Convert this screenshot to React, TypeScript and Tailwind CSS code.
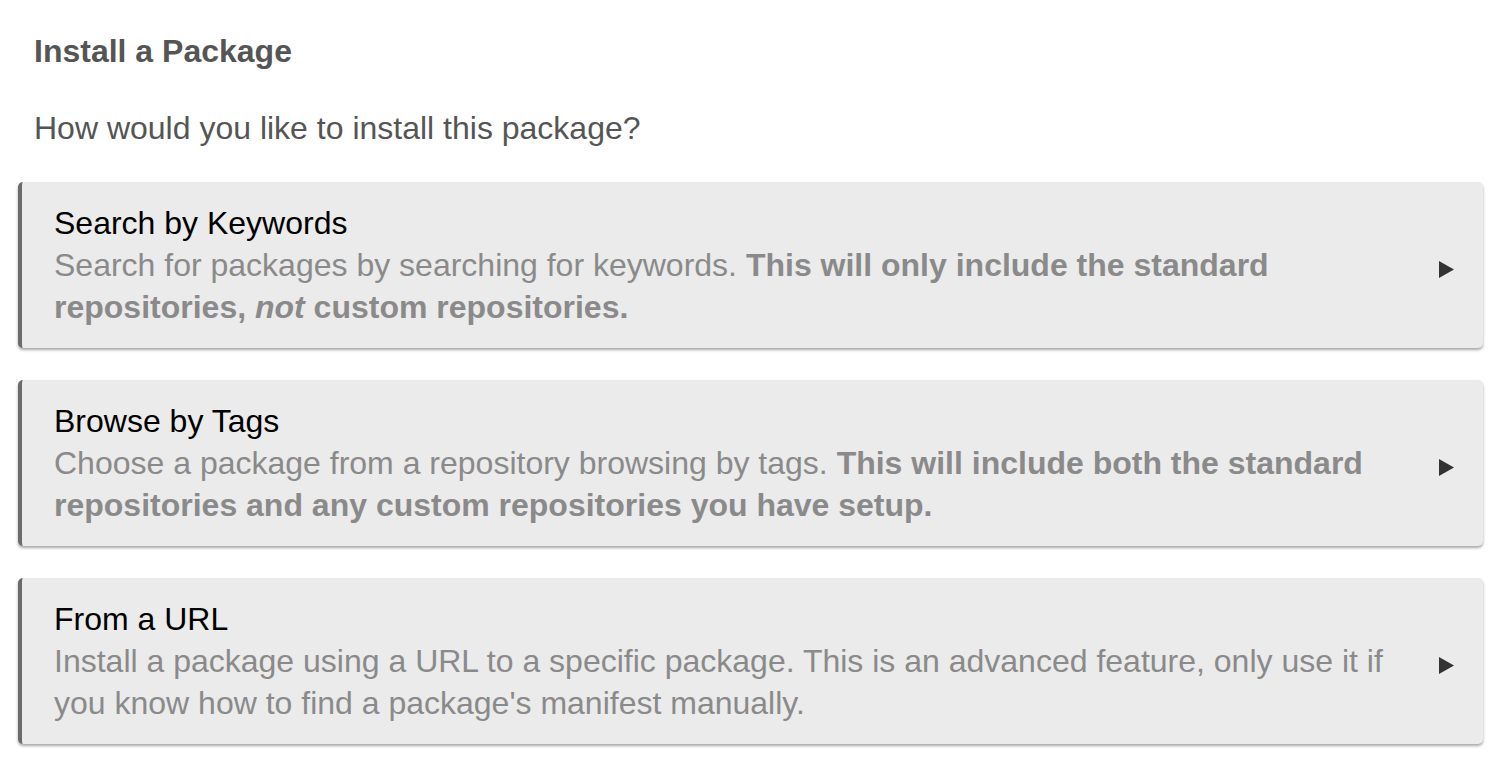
const OPTIONS = [
  {
    title: 'Search by Keywords',
    body: (
      <>
        Search for packages by searching for keywords.{' '}
        <b>
          This will only include the standard repositories, <i>not</i> custom repositories.
        </b>
      </>
    ),
  },
  {
    title: 'Browse by Tags',
    body: (
      <>
        Choose a package from a repository browsing by tags.{' '}
        <b>This will include both the standard repositories and any custom repositories you have setup.</b>
      </>
    ),
  },
  {
    title: 'From a URL',
    body: (
      <>
        Install a package using a URL to a specific package. This is an advanced feature, only use it if you
        know how to find a package's manifest manually.
      </>
    ),
  },
]

export default function App() {
  return (
    <div className="min-h-[780px] bg-white pt-[30px] font-['Liberation_Sans',Arial,sans-serif]">
      <h1 className="pl-[34px] text-[32px] leading-[42px] font-bold text-[#555555]">Install a Package</h1>
      <p className="mt-[35px] pl-[34px] text-[32px] leading-[42px] text-[#555555]">
        How would you like to install this package?
      </p>

      <div className="mt-[33px] ml-[18px] mr-[19px] flex flex-col gap-[32px]">
        {OPTIONS.map((opt) => (
          <div
            key={opt.title}
            className="flex items-center rounded-[5px] border-l-[4px] border-[#6b6b6b] bg-[#ebebeb] py-[20px] pl-[32px] pr-[29px] shadow-[0_2px_3px_rgba(0,0,0,0.35)] cursor-pointer"
          >
            <div className="flex-1 pr-[40px] text-[32px] leading-[42px]">
              <div className="text-black">{opt.title}</div>
              <div className="text-[#8a8a8a]">{opt.body}</div>
            </div>
            <svg width="15" height="17" viewBox="0 0 15 17" className="mt-[8px] shrink-0">
              <polygon points="0,0 15,8.5 0,17" fill="#333333" />
            </svg>
          </div>
        ))}
      </div>
    </div>
  )
}
